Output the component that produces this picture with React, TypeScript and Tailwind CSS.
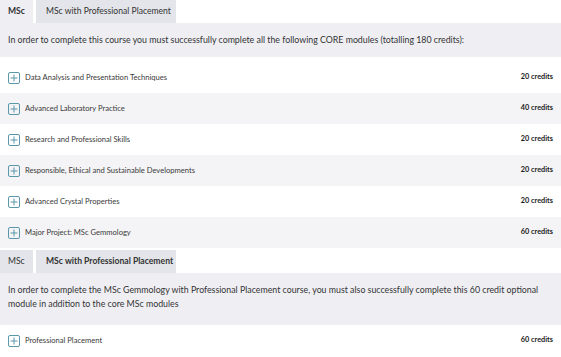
import React from "react";

const core = [
  ["Data Analysis and Presentation Techniques", "20 credits"],
  ["Advanced Laboratory Practice", "40 credits"],
  ["Research and Professional Skills", "20 credits"],
  ["Responsible, Ethical and Sustainable Developments", "20 credits"],
  ["Advanced Crystal Properties", "20 credits"],
  ["Major Project: MSc Gemmology", "60 credits"],
];

function PlusIcon() {
  return (
    <svg width="12" height="12" viewBox="0 0 12 12" className="shrink-0">
      <rect x="0.5" y="0.5" width="11" height="11" rx="1.5" fill="none" stroke="#5b97aa" strokeWidth="1" />
      <path d="M6 2.5V9.5M2.5 6H9.5" stroke="#5b97aa" strokeWidth="1" />
    </svg>
  );
}

function Row({ name, credits, gray }: { name: string; credits: string; gray: boolean }) {
  return (
    <div className={`flex h-[31px] items-center justify-between pl-[8px] pr-[8px] ${gray ? "bg-[#f4f4f6]" : "bg-white"}`}>
      <div className="flex items-center gap-[5px]">
        <PlusIcon />
        <span className="text-[7.6px] text-[#3a3a3a]">{name}</span>
      </div>
      <span className="text-[7.3px] font-bold text-[#222]">{credits}</span>
    </div>
  );
}

function Tabs({ active }: { active: 0 | 1 }) {
  const base = "h-[23px] flex items-center text-[8.6px] text-[#333]";
  return (
    <div className="flex gap-[3px]">
      <div className={`${base} w-[33px] pl-[8px] ${active === 0 ? "bg-[#efeff3] font-bold" : "bg-[#e3e5ea]"}`}>MSc</div>
      <div className={`${base} w-[140px] pl-[10px] ${active === 1 ? "bg-[#e3e5ea] font-bold" : "bg-[#e3e5ea]"}`}>
        MSc with Professional Placement
      </div>
    </div>
  );
}

export default function App() {
  return (
    <div className="w-[561px] h-[357px] overflow-hidden bg-white" style={{ fontFamily: "Lato, 'Noto Sans', sans-serif" }}>
      <Tabs active={0} />
      <div className="bg-[#efeff3] pl-[8px] pt-[10px] pb-[10px] text-[8.8px] leading-[14px] text-[#333]">
        In order to complete this course you must successfully complete all the following CORE modules (totalling 180 credits):
      </div>
      <div className="mt-[5px]">
        {core.map(([n, c], i) => (
          <Row key={n} name={n} credits={c} gray={i % 2 === 1} />
        ))}
      </div>
      <div className="mt-[2px]">
        <Tabs active={1} />
      </div>
      <div className="bg-[#efeff3] pl-[8px] pr-[8px] pt-[10px] pb-[14px] text-[8.8px] leading-[14px] text-[#333]">
        In order to complete the MSc Gemmology with Professional Placement course, you must also successfully complete this 60 credit optional module in addition to the core MSc modules
      </div>
      <Row name="Professional Placement" credits="60 credits" gray={false} />
    </div>
  );
}
